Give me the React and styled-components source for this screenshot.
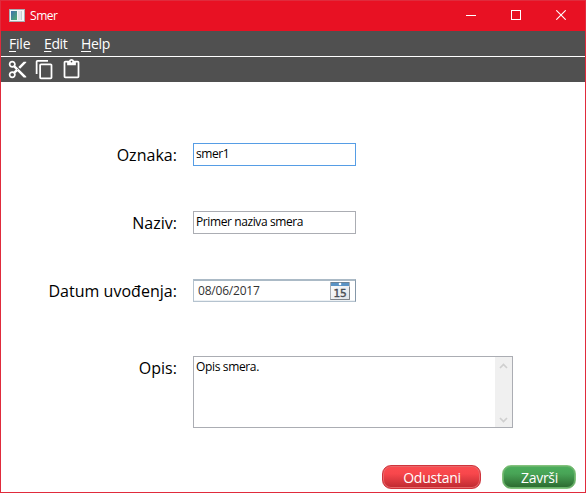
import React from "react";
import styled, { createGlobalStyle } from "styled-components";
import { MdContentCut, MdContentCopy, MdContentPaste } from "react-icons/md";

const GlobalStyle = createGlobalStyle`
  * { box-sizing: border-box; }
  body { margin: 0; background: #fff; font-family: "Open Sans", "Noto Sans", sans-serif; }
`;

const Window = styled.div`
  width: 586px;
  height: 493px;
  display: flex;
  flex-direction: column;
  border: 1px solid #e02b3c;
  background: #fff;
  overflow: hidden;
`;

const TitleBar = styled.header`
  height: 30px;
  flex: none;
  display: flex;
  align-items: center;
  background: #e81123;
  color: #fff;
  padding: 0 2px 0 8px;
`;

const Title = styled.span`
  margin-left: 5px;
  font-size: 12px;
  line-height: 30px;
  letter-spacing: -0.45px;
  flex: 1;
`;

const Caption = styled.div`
  width: 45px;
  height: 30px;
  padding-bottom: 2px;
  display: flex;
  align-items: center;
  justify-content: center;
`;

const MenuBar = styled.nav`
  height: 26px;
  flex: none;
  display: flex;
  gap: 13px;
  padding-left: 8px;
  background: #505050;
  border-bottom: 1px solid #fff;
  color: #fff;
`;

const MenuItem = styled.span`
  width: ${(p) => p.$width}px;
  font-size: 14px;
  line-height: 26px;
  letter-spacing: ${(p) => p.$spacing}px;
  white-space: nowrap;
`;

const Mnemonic = styled.span`
  text-decoration: underline;
  text-decoration-thickness: 1px;
  text-underline-offset: 2px;
`;

const ToolBar = styled.div`
  height: 25px;
  flex: none;
  display: flex;
  align-items: center;
  gap: 6px;
  padding-left: 6px;
  background: #505050;
  color: #fff;
`;

const Form = styled.main`
  flex: 1;
  display: flex;
  flex-direction: column;
  padding-top: 61px;
`;

const Row = styled.div`
  display: grid;
  grid-template-columns: 176px 1fr;
  column-gap: 16px;
  height: ${(p) => p.$height || 23}px;
  margin-bottom: ${(p) => p.$after}px;
`;

const Label = styled.label`
  height: 25px;
  font-size: 16px;
  line-height: 25px;
  letter-spacing: 0.03px;
  text-align: right;
  color: #000;
  white-space: nowrap;
`;

const Field = styled.div`
  width: 163px;
  height: 23px;
  border: 1px solid ${(p) => (p.$focused ? "#569de5" : "#abadb3")};
  background: #fff;
  padding-left: 2px;
  font-size: 12px;
  line-height: 19px;
  letter-spacing: -0.4px;
  color: #000;
  white-space: nowrap;
`;

const DateField = styled.div`
  width: 163px;
  height: 23px;
  display: flex;
  align-items: center;
  justify-content: space-between;
  padding: 0 5px 0 4px;
  border: 1px solid #b5c3cf;
  border-top: 2px solid #abbac6;
  border-right-color: #8597a8;
  box-shadow: inset 0 -1px 0 #edf1f4;
  font-size: 12px;
  letter-spacing: -0.2px;
  line-height: 20px;
  color: #333;
`;

const TextArea = styled.div`
  width: 320px;
  height: 72px;
  display: flex;
  justify-content: space-between;
  border: 1px solid #abadb3;
  padding-left: 2px;
  font-size: 12px;
  line-height: 19px;
  letter-spacing: -0.35px;
`;

const ScrollBar = styled.div`
  width: 17px;
  display: flex;
  flex-direction: column;
  align-items: center;
  justify-content: space-between;
  padding: 6px 0 4px;
  background: #f0f0f0;
`;

const Actions = styled.footer`
  height: 27px;
  flex: none;
  display: flex;
  justify-content: flex-end;
  gap: 21px;
  padding-right: 9px;
`;

const tones = {
  red: { edge: "#cf343c", inner: "#e8696b", fill: "linear-gradient(#fb4c50 0%, #f8474c 35%, #bd2930 100%)" },
  green: { edge: "#82c27c", inner: "#69b36b", fill: "linear-gradient(#4cae5c 0%, #48a456 35%, #2b682e 100%)" },
};

const Button = styled.button`
  width: ${(p) => p.$width}px;
  height: 24px;
  padding: 0 0 0 1px;
  border: 1px solid ${(p) => tones[p.$tone].edge};
  border-radius: 9px;
  box-shadow: inset 0 0 0 1px ${(p) => tones[p.$tone].inner};
  background: ${(p) => tones[p.$tone].fill};
  color: #fff;
  font: 14px/24px "Open Sans", "Noto Sans", sans-serif;
  letter-spacing: ${(p) => p.$spacing}px;
`;

function AppIcon() {
  return (
    <svg width="16" height="14" viewBox="0 0 16 14">
      <defs>
        <linearGradient id="pane" x1="0" y1="0" x2="1" y2="1">
          <stop offset="0" stopColor="#3c6fae" />
          <stop offset="1" stopColor="#4fae70" />
        </linearGradient>
      </defs>
      <rect x="0.5" y="0.5" width="15" height="12" fill="#f3f5f6" stroke="#a8adb2" />
      <rect x="2" y="2" width="6" height="9" fill="url(#pane)" />
      <rect x="9" y="2" width="3" height="9" fill="#dfe4e8" />
      <path d="M12.5 2v9" stroke="#c5ccd1" />
    </svg>
  );
}

function CalendarIcon() {
  return (
    <svg width="20" height="18" viewBox="0 0 20 18">
      <defs>
        <linearGradient id="page" x1="0" y1="0" x2="1" y2="1">
          <stop offset="0" stopColor="#fff" />
          <stop offset="1" stopColor="#dfe3e7" />
        </linearGradient>
      </defs>
      <rect x="0.5" y="0.5" width="19" height="17" fill="url(#page)" stroke="#a9afb5" />
      <rect x="1" y="0" width="18" height="1" fill="#6b8296" />
      <rect x="1" y="1" width="18" height="3" fill="#5a93c5" />
      <circle cx="10" cy="2" r="1.3" fill="#fff" />
      <path d="M0.5 17.5h19V5" fill="none" stroke="#7d8288" />
      <text x="3.5" y="15" textLength="13" lengthAdjust="spacingAndGlyphs" fontFamily="DejaVu Sans, sans-serif" fontSize="10" stroke="#4a4f55" strokeWidth="0.4" fill="#4a4f55">15</text>
    </svg>
  );
}

function Chevron({ down }) {
  return (
    <svg width="9" height="6" viewBox="0 0 9 6">
      <path d={down ? "M1 1L4.5 4.5L8 1" : "M1 5L4.5 1.5L8 5"} fill="none" stroke="#cfcfcf" strokeWidth="1.7" />
    </svg>
  );
}

export default function App() {
  return (
    <>
      <GlobalStyle />
      <Window>
        <TitleBar>
          <AppIcon />
          <Title>Smer</Title>
          <Caption>
            <svg width="10" height="10"><path d="M0 5.5h10" stroke="#fff" /></svg>
          </Caption>
          <Caption>
            <svg width="10" height="10"><rect x="0.5" y="0.5" width="9" height="9" fill="none" stroke="#fff" /></svg>
          </Caption>
          <Caption>
            <svg width="10" height="10"><path d="M0.3 0.3l9.4 9.4M9.7 0.3l-9.4 9.4" stroke="#fff" strokeWidth="1.1" /></svg>
          </Caption>
        </TitleBar>
        <MenuBar>
          <MenuItem $width={22} $spacing={-0.2}><Mnemonic>F</Mnemonic>ile</MenuItem>
          <MenuItem $width={24} $spacing={-0.4}><Mnemonic>E</Mnemonic>dit</MenuItem>
          <MenuItem $width={30} $spacing={-0.3}><Mnemonic>H</Mnemonic>elp</MenuItem>
        </MenuBar>
        <ToolBar>
          <MdContentCut size={21} />
          <MdContentCopy size={21} />
          <MdContentPaste size={21} />
        </ToolBar>
        <Form>
          <Row $after={45}>
            <Label>Oznaka:</Label>
            <Field $focused>smer1</Field>
          </Row>
          <Row $after={45}>
            <Label>Naziv:</Label>
            <Field>Primer naziva smera</Field>
          </Row>
          <Row $after={54}>
            <Label>Datum uvođenja:</Label>
            <DateField>
              <span>08/06/2017</span>
              <CalendarIcon />
            </DateField>
          </Row>
          <Row $height={72} $after={0}>
            <Label>Opis:</Label>
            <TextArea>
              <span>Opis smera.</span>
              <ScrollBar>
                <Chevron />
                <Chevron down />
              </ScrollBar>
            </TextArea>
          </Row>
        </Form>
        <Actions>
          <Button $tone="red" $width={99} $spacing={-0.25}>Odustani</Button>
          <Button $tone="green" $width={74} $spacing={-0.3}>Završi</Button>
        </Actions>
      </Window>
    </>
  );
}
